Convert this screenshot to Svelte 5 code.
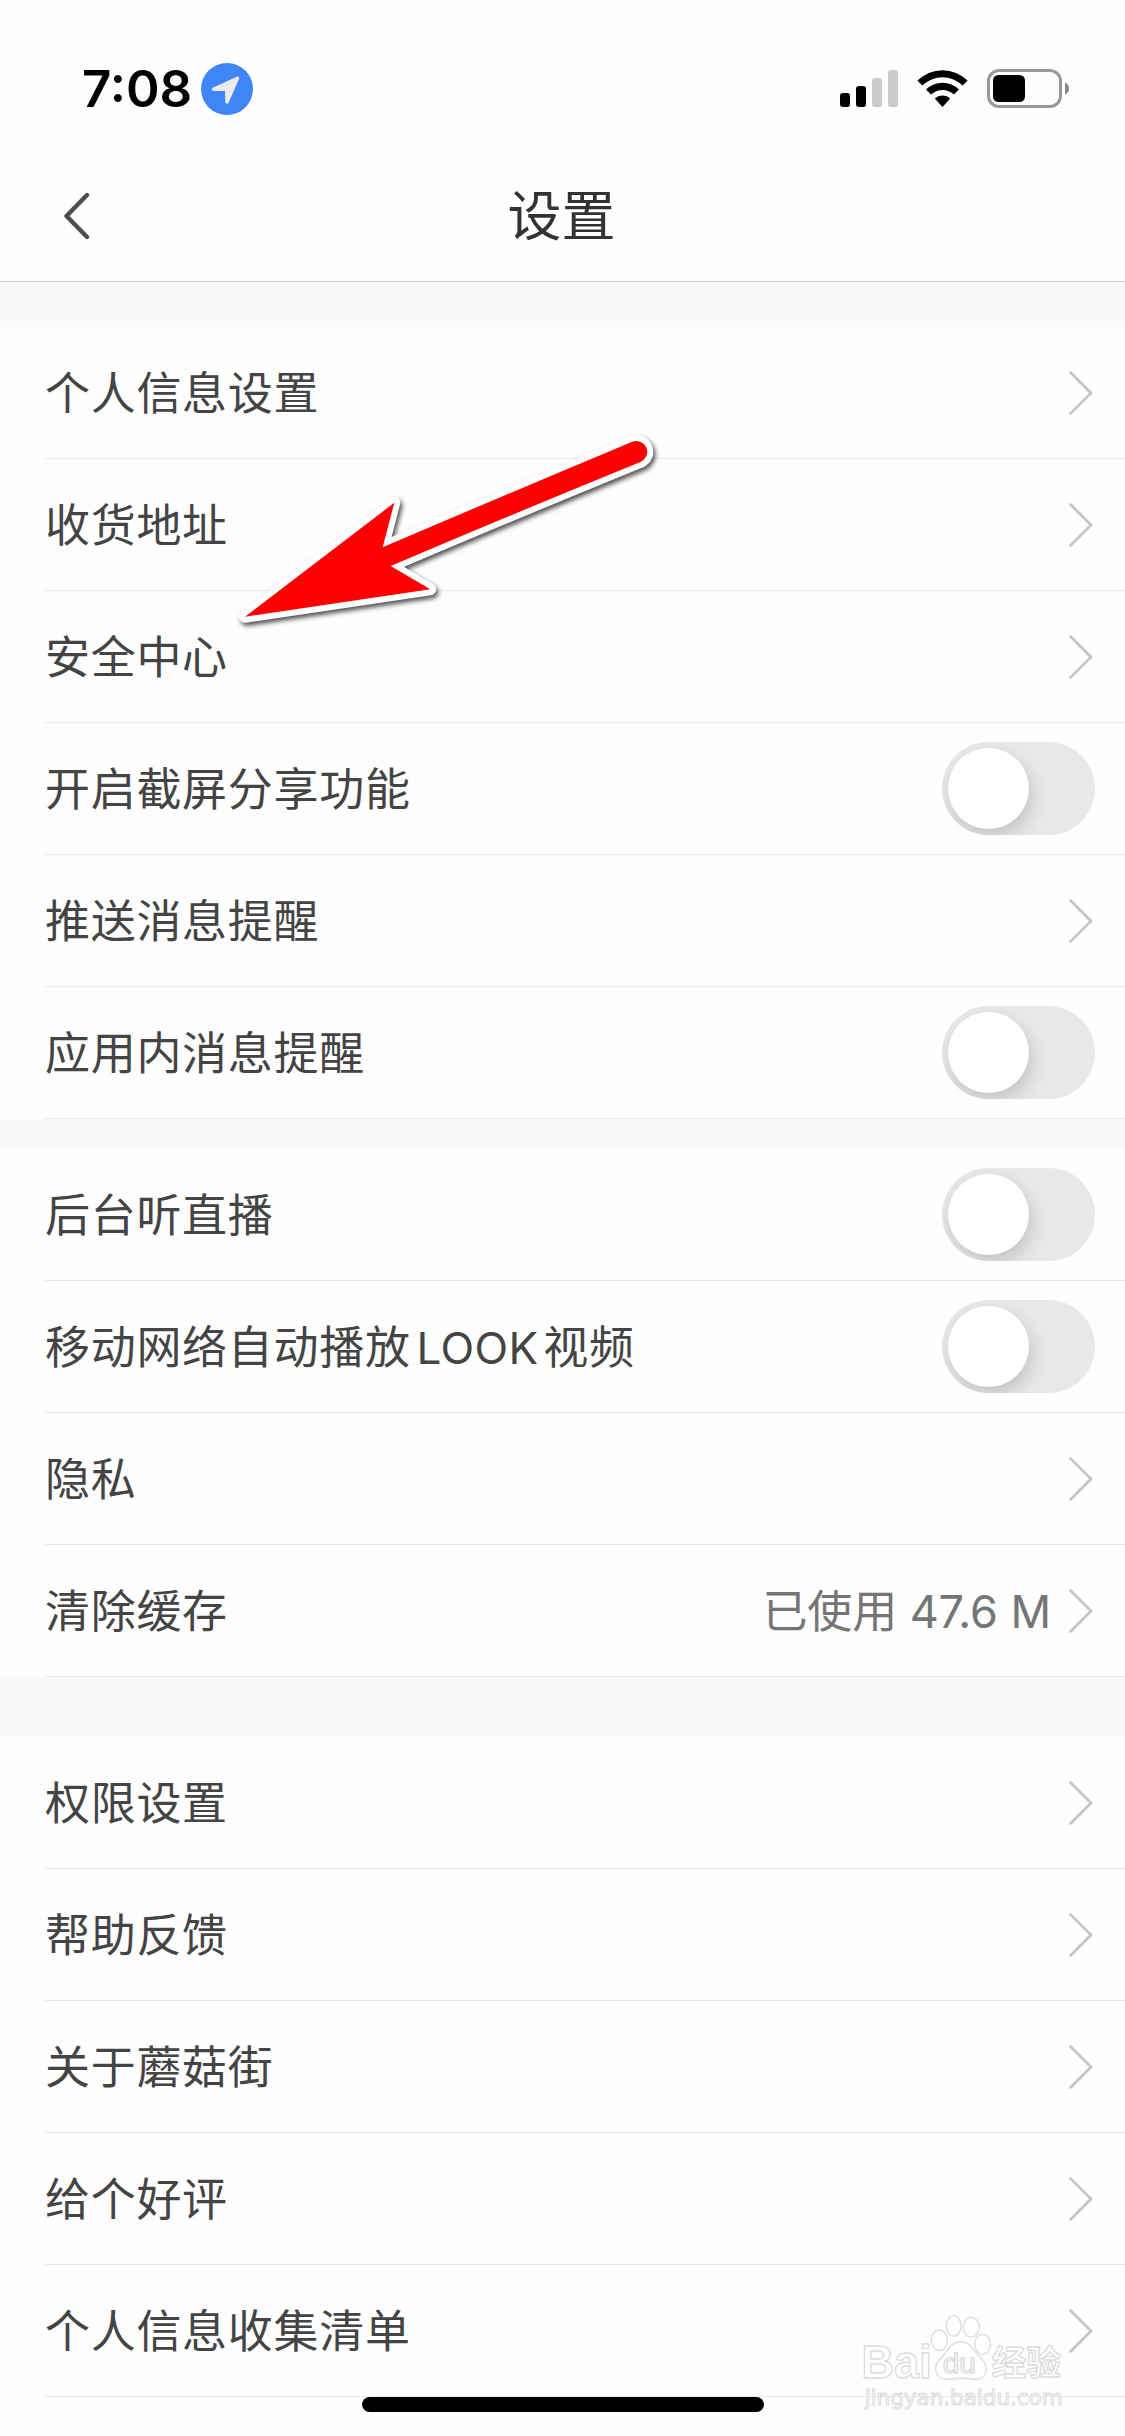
<script>
  let groups = $state([
    {
      gap: 45,
      rows: [
        { label: '个人信息设置' },
        { label: '收货地址' },
        { label: '安全中心' },
        { label: '开启截屏分享功能', toggle: true, on: false },
        { label: '推送消息提醒' },
        { label: '应用内消息提醒', toggle: true, on: false }
      ]
    },
    {
      gap: 30,
      rows: [
        { label: '后台听直播', toggle: true, on: false },
        { label: '移动网络自动播放LOOK视频', toggle: true, on: false },
        { label: '隐私' },
        { label: '清除缓存', value: '已使用 47.6 M' }
      ]
    },
    {
      gap: 60,
      rows: [
        { label: '权限设置' },
        { label: '帮助反馈' },
        { label: '关于蘑菇街' },
        { label: '给个好评' },
        { label: '个人信息收集清单' }
      ]
    }
  ]);

  // latin runs sit a little apart from the chinese text
  const split = (text) => text.split(/([A-Z]{2,})/).filter(Boolean);
</script>

<div class="screen">
  <div class="status-bar">
    <div class="status-left">
      <span class="time">7:08</span>
      <svg class="location" viewBox="0 0 52 52">
        <circle cx="26" cy="26" r="26" fill="#3f85f8" />
        <path d="M12.5 26.2 L36.5 15.3 L26 39 L25.6 26.4 Z" fill="#ebebeb" stroke="#ebebeb" stroke-width="3.4" stroke-linejoin="round" />
      </svg>
    </div>
    <div class="status-right">
      <svg class="signal" viewBox="0 0 58 37">
        <rect x="0" y="23" width="10" height="14" rx="3" />
        <rect x="16" y="16" width="10" height="21" rx="3" />
        <rect x="32" y="8" width="10" height="29" rx="3" fill="#cbcbcb" />
        <rect x="48" y="0" width="10" height="37" rx="3" fill="#cbcbcb" />
      </svg>
      <svg class="wifi" viewBox="0 0 51 37">
        <path d="M0.4 10.6 A35.5 35.5 0 0 1 50.6 10.6 L45.7 15.6 A28.6 28.6 0 0 0 5.3 15.6 Z" />
        <path d="M9.1 19.6 A23.2 23.2 0 0 1 41.9 19.6 L37 24.6 A16.4 16.4 0 0 0 14 24.6 Z" />
        <path d="M17.8 28.6 A11 11 0 0 1 33.2 28.6 L25.5 37 Z" />
      </svg>
      <svg class="battery" viewBox="0 0 82 39">
        <rect x="1.5" y="1.5" width="72" height="36" rx="10.5" fill="none" stroke="#999" stroke-width="3" />
        <rect x="6" y="6" width="32" height="27" rx="5.5" />
        <path d="M78 13.5 Q82 15.5 82 19.5 Q82 23.5 78 25.5 Z" fill="#858585" />
      </svg>
    </div>
  </div>

  <header class="nav-bar">
    <button class="back" aria-label="返回">
      <svg viewBox="0 0 28 48">
        <path d="M24 3 L3.5 24 L24 45" fill="none" stroke="#4d4d4d" stroke-width="4.4" stroke-linecap="round" stroke-linejoin="round" />
      </svg>
    </button>
    <h1>设置</h1>
  </header>

  <main>
    {#each groups as group}
      <section class="group" style="margin-top: {group.gap}px">
        {#each group.rows as row}
          <div class="row">
            <span class="label">{#each split(row.label) as part}<span class:latin={/^[A-Z]/.test(part)}>{part}</span>{/each}</span>
            {#if row.toggle}
              <button class="toggle" class:on={row.on} role="switch" aria-checked={row.on} aria-label={row.label} onclick={() => (row.on = !row.on)}>
                <span class="knob"></span>
              </button>
            {:else}
              {#if row.value}
                <span class="value">{row.value}</span>
              {/if}
              <svg class="chevron" viewBox="0 0 24 44">
                <path d="M1.5 1.5 L22 22 L1.5 42.5" fill="none" stroke="#c6c6c6" stroke-width="2.8" stroke-linecap="round" stroke-linejoin="round" />
              </svg>
            {/if}
          </div>
        {/each}
      </section>
    {/each}
  </main>

  <svg class="arrow" viewBox="220 420 460 220">
    <path class="outline" d="M245 616.7 L394.3 502.7 L382.7 547.3 Q506 494.5 631.8 442 A10.6 10.6 0 0 1 641 461.7 Q514 513.5 390.7 566 L430.3 589.3 Z" />
    <path d="M245 616.7 L394.3 502.7 L382.7 547.3 Q506 494.5 631.8 442 A10.6 10.6 0 0 1 641 461.7 Q514 513.5 390.7 566 L430.3 589.3 Z" fill="#f00" />
  </svg>

  <svg class="watermark" viewBox="0 0 855 468">
    <g class="mark">
      <text x="64" y="294" font-size="136" font-weight="700" textLength="212" lengthAdjust="spacingAndGlyphs">Bai</text>
      <ellipse cx="298" cy="181" rx="24" ry="31" />
      <ellipse cx="341" cy="138" rx="22" ry="31" />
      <ellipse cx="394" cy="142" rx="24" ry="30" />
      <ellipse cx="428" cy="193" rx="24" ry="30" />
      <path d="M362 185 C388 185 398 208 413 224 C430 240 442 254 438 274 C433 296 412 300 394 297 C372 294 352 294 332 297 C308 301 288 291 287 268 C286 247 302 236 314 222 C328 204 338 185 362 185 Z" />
      <text x="308" y="278" font-size="82" textLength="100" lengthAdjust="spacingAndGlyphs">du</text>
      <text class="cjk" x="455" y="284" font-size="104" font-weight="700" textLength="208" lengthAdjust="spacingAndGlyphs">经验</text>
      <text class="url" x="74" y="374" font-size="62" textLength="594" lengthAdjust="spacingAndGlyphs">jingyan.baidu.com</text>
    </g>
  </svg>

  <div class="home-indicator"></div>
</div>

<style>
  :global(body) {
    margin: 0;
    background: #fff;
  }

  .screen {
    position: relative;
    width: 1125px;
    height: 2436px;
    overflow: hidden;
    background: #fefefe;
    font-family: Inter, "Noto Sans CJK SC", sans-serif;
    color: #444;
  }

  button {
    padding: 0;
    border: 0;
    background: none;
    cursor: pointer;
  }

  svg {
    display: block;
    flex: none;
  }

  .status-bar {
    display: flex;
    align-items: center;
    justify-content: space-between;
    box-sizing: border-box;
    height: 132px;
    padding: 45px 56px 0 82px;
  }

  .status-left,
  .status-right {
    display: flex;
    align-items: center;
  }

  .status-left {
    gap: 10px;
  }

  .time {
    width: 109px;
    font-size: 51px;
    font-weight: 600;
    line-height: 52px;
    color: #000;
    white-space: nowrap;
  }

  .location {
    width: 52px;
    height: 52px;
  }

  .signal {
    width: 58px;
    height: 37px;
    margin-right: 19px;
  }

  .wifi {
    width: 51px;
    height: 37px;
    margin-right: 19px;
  }

  .battery {
    width: 82px;
    height: 39px;
  }

  .nav-bar {
    display: grid;
    grid-template-columns: 120px 1fr 120px;
    align-items: center;
    box-sizing: border-box;
    height: 150px;
    padding-top: 19px;
    border-bottom: 1px solid #c8c8c8;
  }

  .back {
    width: 28px;
    height: 48px;
    margin-left: 63px;
  }

  h1 {
    margin: 0;
    padding: 2px 2px 0 0;
    font-size: 54px;
    font-weight: 400;
    line-height: 60px;
    text-align: center;
    color: #333;
  }

  main {
    display: flow-root;
    background: #f9f9f9;
  }

  .group {
    background: #fefefe;
  }

  .row {
    display: flex;
    align-items: center;
    box-sizing: border-box;
    height: 132px;
    margin-left: 45px;
    padding-right: 30px;
    border-bottom: 1px solid #e9e9e9;
  }

  .label {
    flex: 1;
    padding-top: 3px;
    font-size: 45px;
    line-height: 60px;
    letter-spacing: 0.7px;
  }

  .latin {
    margin: 0 5px 0 6px;
    font-size: 44px;
    letter-spacing: 0.3px;
  }

  .value {
    margin-right: 18px;
    padding-top: 2px;
    font-size: 45px;
    line-height: 60px;
    letter-spacing: -0.1px;
    color: #757575;
  }

  .chevron {
    width: 24px;
    height: 44px;
    margin-right: 2px;
  }

  .toggle {
    display: flex;
    align-items: center;
    box-sizing: border-box;
    width: 153px;
    height: 93px;
    padding: 0 6px;
    overflow: hidden;
    border-radius: 47px;
    background: #e8e8e8;
  }

  .toggle.on {
    justify-content: flex-end;
    background: #ff5777;
  }

  .knob {
    width: 81px;
    height: 81px;
    border-radius: 50%;
    background: #fff;
    box-shadow: 3px 8px 18px rgba(0, 0, 0, 0.16);
  }

  .arrow {
    position: absolute;
    top: 420px;
    left: 220px;
    width: 460px;
    height: 220px;
    filter: drop-shadow(2px 3px 2.5px rgba(0, 0, 0, 0.7));
    pointer-events: none;
  }

  .outline {
    fill: #fff;
    stroke: #fff;
    stroke-width: 12;
    stroke-linejoin: round;
  }

  .watermark {
    position: absolute;
    top: 2280px;
    left: 840px;
    width: 285px;
    height: 156px;
    pointer-events: none;
  }

  .mark {
    fill: #fff;
    stroke: #dcdcdc;
    stroke-width: 4;
    font-family: "Liberation Sans", sans-serif;
  }

  .mark .cjk {
    font-family: "Noto Sans CJK SC", sans-serif;
  }

  .mark .url {
    font-family: "DejaVu Sans", sans-serif;
    stroke-width: 3;
  }

  .home-indicator {
    position: absolute;
    bottom: 24px;
    left: 362px;
    width: 402px;
    height: 15px;
    border-radius: 8px;
    background: #000;
  }
</style>
